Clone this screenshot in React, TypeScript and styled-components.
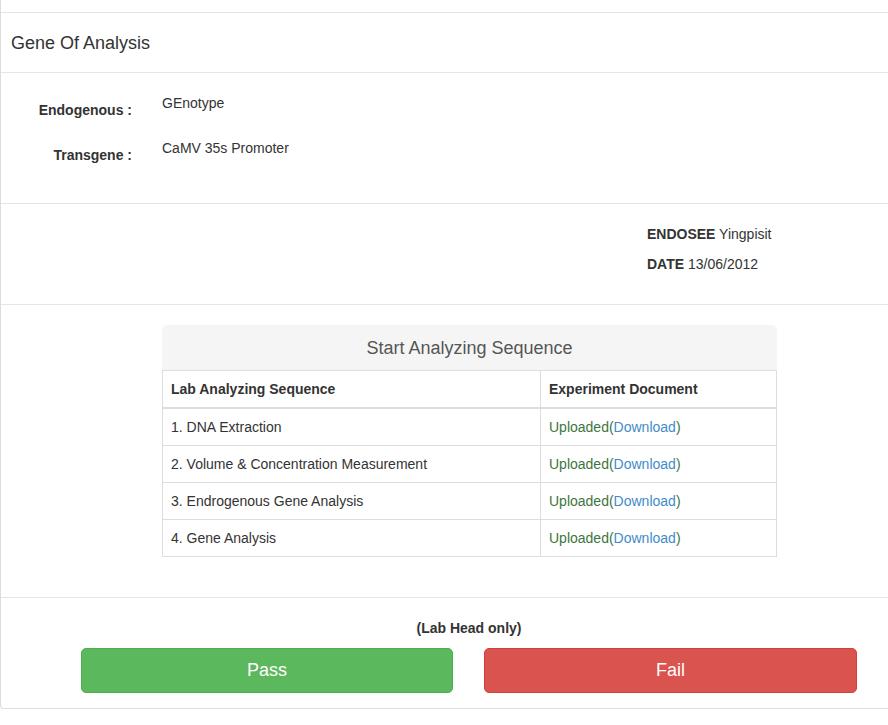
import React from "react";
import styled, { createGlobalStyle } from "styled-components";

const GlobalStyle = createGlobalStyle`
  body {
    margin: 0;
    background: #fff;
    font-family: "Liberation Sans", Arial, sans-serif;
    font-size: 14px;
    line-height: 20px;
    color: #333;
  }
`;

const lineColor = "#e5e5e5";

const Panel = styled.div`
  border-left: 1px solid #ddd;
  border-bottom: 1px solid #ddd;
  border-bottom-left-radius: 4px;
  background: #fff;
`;

const TopStrip = styled.div`
  height: 12px;
  border-bottom: 1px solid ${lineColor};
`;

const Heading = styled.div`
  height: 58px;
  display: flex;
  align-items: center;
  padding-left: 10px;
  font-size: 18px;
  padding-top: 1px;
  border-bottom: 1px solid ${lineColor};
`;

const Section = styled.div<{ $pt: number; $pb: number }>`
  padding-top: ${(p) => p.$pt}px;
  padding-bottom: ${(p) => p.$pb}px;
  border-bottom: 1px solid ${lineColor};
`;

const InfoGrid = styled.div`
  display: grid;
  grid-template-columns: 131px 1fr;
  column-gap: 30px;
  row-gap: 18px;
`;

const Label = styled.div`
  font-weight: bold;
  text-align: right;
  padding-top: 7px;
`;

const Value = styled.div`
  height: 27px;
`;

const Endorse = styled.div`
  margin-left: 646px;
  display: flex;
  flex-direction: column;
  gap: 10px;
`;

const TablePanel = styled.div`
  width: 615px;
  margin-left: 161px;
`;

const TableTitle = styled.div`
  background: #f5f5f5;
  border-top-left-radius: 5px;
  border-top-right-radius: 5px;
  height: 45px;
  display: flex;
  align-items: center;
  justify-content: center;
  font-size: 18px;
  color: #555;
`;

const Table = styled.table`
  width: 100%;
  border-collapse: collapse;
  border-spacing: 0;
  td,
  th {
    border: 1px solid #ddd;
    padding: 8px;
    text-align: left;
    line-height: 20px;
  }
  th {
    border-bottom-width: 2px;
  }
`;

const FirstCol = styled.th`
  width: 361px;
`;

const Uploaded = styled.span`
  color: #3c763d;
`;

const DownloadLink = styled.a`
  color: #428bca;
  text-decoration: none;
`;

const ActionArea = styled.div`
  padding: 20px 0 15px;
`;

const Actions = styled.div`
  margin-left: 80px;
  width: 776px;
  display: flex;
  flex-direction: column;
  align-items: center;
  gap: 10px;
`;

const Note = styled.div`
  font-weight: bold;
`;

const ButtonRow = styled.div`
  display: grid;
  grid-template-columns: 372px 373px;
  column-gap: 31px;
  width: 100%;
`;

const Button = styled.button<{ $kind: "pass" | "fail" }>`
  height: 45px;
  border-radius: 5px;
  border: 1px solid ${(p) => (p.$kind === "pass" ? "#4cae4c" : "#d43f3a")};
  background: ${(p) => (p.$kind === "pass" ? "#5cb85c" : "#d9534f")};
  color: #fff;
  font-family: "Liberation Sans", Arial, sans-serif;
  font-size: 18px;
  cursor: pointer;
`;

const steps = [
  "1. DNA Extraction",
  "2. Volume & Concentration Measurement",
  "3. Endrogenous Gene Analysis",
  "4. Gene Analysis",
];

export default function App() {
  return (
    <>
      <GlobalStyle />
      <Panel>
        <TopStrip />
        <Heading>Gene Of Analysis</Heading>
        <Section $pt={20} $pb={38}>
          <InfoGrid>
            <Label>Endogenous :</Label>
            <Value>GEnotype</Value>
            <Label>Transgene :</Label>
            <Value>CaMV 35s Promoter</Value>
          </InfoGrid>
        </Section>
        <Section $pt={20} $pb={30}>
          <Endorse>
            <div>
              <b>ENDOSEE</b> Yingpisit
            </div>
            <div>
              <b>DATE</b> 13/06/2012
            </div>
          </Endorse>
        </Section>
        <Section $pt={20} $pb={40}>
          <TablePanel>
            <TableTitle>Start Analyzing Sequence</TableTitle>
            <Table>
              <thead>
                <tr>
                  <FirstCol>Lab Analyzing Sequence</FirstCol>
                  <th>Experiment Document</th>
                </tr>
              </thead>
              <tbody>
                {steps.map((s) => (
                  <tr key={s}>
                    <td>{s}</td>
                    <td>
                      <Uploaded>Uploaded(</Uploaded>
                      <DownloadLink href="#">Download</DownloadLink>
                      <Uploaded>)</Uploaded>
                    </td>
                  </tr>
                ))}
              </tbody>
            </Table>
          </TablePanel>
        </Section>
        <ActionArea>
          <Actions>
            <Note>(Lab Head only)</Note>
            <ButtonRow>
              <Button $kind="pass">Pass</Button>
              <Button $kind="fail">Fail</Button>
            </ButtonRow>
          </Actions>
        </ActionArea>
      </Panel>
    </>
  );
}
